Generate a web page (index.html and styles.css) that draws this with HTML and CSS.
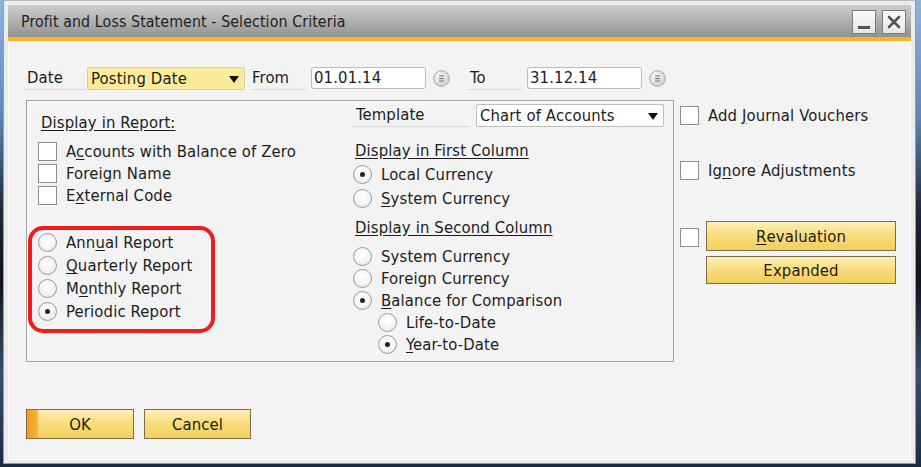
FILE: index.html
```html
<!DOCTYPE html>
<html>
<head>
<meta charset="utf-8">
<link rel="stylesheet" href="styles.css">
</head>
<body>
<div class="window">
  <div class="titlebar">
    <span class="title">Profit and Loss Statement - Selection Criteria</span>
    <div class="tbtns">
      <span class="tbtn"><svg width="16" height="16" viewBox="0 0 16 16"><rect x="2" y="12" width="12" height="3" fill="#555"/></svg></span>
      <span class="tbtn"><svg width="16" height="16" viewBox="0 0 16 16"><path d="M3 3 L13 13 M13 3 L3 13" stroke="#555" stroke-width="2.6" stroke-linecap="round"/></svg></span>
    </div>
  </div>
  <div class="content">
    <div class="daterow">
      <span class="lbl lbl-date">Date</span>
      <span class="combo combo-yellow">Posting Date<span class="arrow"></span></span>
      <span class="lbl lbl-from">From</span>
      <span class="field">01.01.14</span>
      <span class="cal"><svg width="17" height="17" viewBox="0 0 17 17"><defs><radialGradient id="g1" cx="0.4" cy="0.35" r="0.7"><stop offset="0" stop-color="#fbfbfb"/><stop offset="1" stop-color="#c9ccd2"/></radialGradient></defs><circle cx="8.5" cy="8.5" r="7.8" fill="url(#g1)" stroke="#a3a7ae" stroke-width="1"/><path d="M6.2 5.8h4.6M6.2 8.5h4.6M6.2 11.2h4.6" stroke="#7d828a" stroke-width="1.3"/></svg></span>
      <span class="lbl lbl-to">To</span>
      <span class="field">31.12.14</span>
      <span class="cal"><svg width="17" height="17" viewBox="0 0 17 17"><defs><radialGradient id="g2" cx="0.4" cy="0.35" r="0.7"><stop offset="0" stop-color="#fbfbfb"/><stop offset="1" stop-color="#c9ccd2"/></radialGradient></defs><circle cx="8.5" cy="8.5" r="7.8" fill="url(#g2)" stroke="#a3a7ae" stroke-width="1"/><path d="M6.2 5.8h4.6M6.2 8.5h4.6M6.2 11.2h4.6" stroke="#7d828a" stroke-width="1.3"/></svg></span>
    </div>

    <div class="middle">
      <div class="group">
        <div class="col col-left">
          <div class="heading">Display in Report:</div>
          <div class="checks">
            <div class="row"><span class="cb"></span><span>A<u>c</u>counts with Balance of Zero</span></div>
            <div class="row"><span class="cb"></span><span>Forei<u>g</u>n Name</span></div>
            <div class="row"><span class="cb"></span><span>E<u>x</u>ternal Code</span></div>
          </div>
          <div class="highlight">
            <div class="row r23"><span class="rb"></span><span>Ann<u>u</u>al Report</span></div>
            <div class="row r23"><span class="rb"></span><span><u>Q</u>uarterly Report</span></div>
            <div class="row r23"><span class="rb"></span><span>M<u>o</u>nthly Report</span></div>
            <div class="row r23"><span class="rb on"></span><span>Periodic Report</span></div>
          </div>
        </div>
        <div class="col col-right">
          <div class="tplrow">
            <span class="lbl lbl-tpl">Template</span>
            <span class="combo combo-white">Chart of Accounts<span class="arrow"></span></span>
          </div>
          <div class="heading h-first">Display in First Column</div>
          <div class="row r24 rr"><span class="rb on"></span><span>Local Currency</span></div>
          <div class="row r24 rr"><span class="rb"></span><span><u>S</u>ystem Currency</span></div>
          <div class="heading h-second">Display in Second Column</div>
          <div class="row rr first2"><span class="rb"></span><span>System Currency</span></div>
          <div class="row rr"><span class="rb"></span><span>Foreign Currency</span></div>
          <div class="row rr"><span class="rb on"></span><span><u>B</u>alance for Comparison</span></div>
          <div class="row rr sub"><span class="rb"></span><span>Life-to-Date</span></div>
          <div class="row rr sub r23"><span class="rb on"></span><span><u>Y</u>ear-to-Date</span></div>
        </div>
      </div>

      <div class="side">
        <div class="row side-row1"><span class="cb"></span><span>Add <u>J</u>ournal Vouchers</span></div>
        <div class="row side-row2"><span class="cb"></span><span>Ig<u>n</u>ore Adjustments</span></div>
        <div class="side-row3">
          <span class="cb"></span>
          <div class="btnstack">
            <span class="btn btn-wide btn-reval"><u>R</u>evaluation</span>
            <span class="btn btn-wide btn-exp">Expanded</span>
          </div>
        </div>
      </div>
    </div>

    <div class="actions">
      <span class="btn btn-ok">OK</span>
      <span class="btn btn-cancel">Cancel</span>
    </div>
  </div>
</div>
</body>
</html>
```

FILE: styles.css
```css
html, body {
  margin: 0;
  padding: 0;
}
body {
  width: 921px;
  height: 467px;
  overflow: hidden;
  background: linear-gradient(180deg, #8fb4dc 0%, #5f86b4 25%, #1e2838 45%, #0d1420 60%, #3a4f6a 80%, #1b2a40 100%);
  font-family: "DejaVu Sans Condensed", "DejaVu Sans", sans-serif;
  font-size: 16.5px;
  letter-spacing: 0.15px;
  color: #1c1c1c;
}
.window {
  margin-left: 3px;
  width: 913px;
  height: 464px;
  box-sizing: border-box;
  background: #ececec;
  border: 1px solid #9a9a9a;
  border-top-color: #b8b8b8;
  padding: 4px 4px 3px 4px;
  display: flex;
  flex-direction: column;
}
.titlebar {
  height: 32px;
  border-bottom: 4px solid #f1b52a;
  background: linear-gradient(180deg, #cdcdcd 0%, #b4b4b4 45%, #929292 100%);
  display: flex;
  align-items: center;
  justify-content: space-between;
  padding-left: 13px;
  padding-right: 5px;
  flex: none;
}
.title {
  font-size: 15.8px;
  letter-spacing: 0.1px;
  color: #1e1e1e;
  padding-top: 1px;
}
.tbtns {
  display: flex;
  gap: 6px;
  padding-top: 1px;
}
.tbtn {
  width: 22px;
  height: 22px;
  border: 1px solid #7b7b7b;
  background: linear-gradient(180deg, #fbfbfb, #e6e6e6);
  display: flex;
  align-items: center;
  justify-content: center;
}
.content {
  flex: 1;
  background: #f3f3f3;
  border: 1px solid #ffffff;
  border-top: none;
  padding-left: 16px;
}

/* date row */
.daterow {
  display: flex;
  align-items: center;
  margin-top: 25px;
  height: 24px;
}
.lbl {
  box-sizing: border-box;
  height: 24px;
  line-height: 23px;
  border-bottom: 1px solid #d9d9d9;
  padding-left: 2px;
}
.lbl-date { width: 60px; margin-right: 2px; }
.lbl-from { width: 55px; margin-left: 6px; margin-right: 5px; padding-left: 1px; }
.lbl-to { width: 55px; margin-left: 17px; margin-right: 5px; padding-left: 3px; }
.combo {
  box-sizing: border-box;
  position: relative;
  height: 23px;
  line-height: 21px;
  padding-left: 3px;
  border: 1px solid #c9c9c9;
  border-radius: 2px;
}
.combo-yellow {
  width: 158px;
  background: #fdeb9c;
  border-color: #d8cf9e;
}
.combo-white {
  width: 188px;
  background: #ffffff;
  border-color: #bdbdbd;
}
.arrow {
  position: absolute;
  right: 5px;
  top: 8px;
  width: 0;
  height: 0;
  border-left: 5px solid transparent;
  border-right: 5px solid transparent;
  border-top: 7px solid #111;
}
.field {
  box-sizing: border-box;
  width: 115px;
  height: 22px;
  line-height: 20px;
  padding-left: 2px;
  background: #fff;
  border: 1px solid #bcbcbc;
  border-radius: 3px;
}
.cal {
  margin-left: 7px;
  width: 17px;
  height: 17px;
  display: flex;
}

/* middle */
.middle {
  display: flex;
  margin-top: 10px;
  margin-left: 1px;
}
.group {
  box-sizing: border-box;
  width: 648px;
  height: 262px;
  border: 1px solid #a3a3a3;
  box-shadow: inset 1px 1px 0 #ffffff;
  display: flex;
}
.col-left {
  width: 325px;
  padding-left: 11px;
  padding-top: 11px;
  box-sizing: border-box;
}
.col-right {
  padding-top: 3px;
}
.heading {
  height: 22px;
  line-height: 22px;
  padding-left: 3px;
  text-decoration: underline;
  text-underline-offset: 2px;
}
.checks {
  margin-top: 6px;
}
.row {
  display: flex;
  align-items: center;
  height: 22px;
}
.r23 { height: 23px; }
.r24 { height: 24px; }
.cb {
  box-sizing: border-box;
  width: 19px;
  height: 19px;
  border: 1px solid #8d8d8d;
  background: #ffffff;
  margin-right: 9px;
  flex: none;
}
.rb {
  box-sizing: border-box;
  width: 19px;
  height: 19px;
  border-radius: 50%;
  border: 1px solid #9b9b9b;
  background: radial-gradient(circle at 50% 40%, #ffffff 0%, #f4f4f4 55%, #dcdcdc 100%);
  margin-right: 9px;
  flex: none;
  display: flex;
  align-items: center;
  justify-content: center;
}
.rb.on::after {
  content: "";
  width: 5px;
  height: 5px;
  border-radius: 50%;
  background: #222;
}
u {
  text-underline-offset: 2px;
}
.highlight {
  box-sizing: border-box;
  width: 187px;
  margin-top: 20px;
  margin-left: -10px;
  border: 4px solid #ee1c1c;
  border-radius: 15px;
  padding: 1px 0 6px 6px;
}

.tplrow {
  display: flex;
  align-items: center;
  height: 23px;
}
.lbl-tpl {
  width: 118px;
  margin-right: 6px;
  padding-left: 4px;
  height: 23px;
  line-height: 22px;
}
.h-first { margin-top: 13px; }
.h-second { margin-top: 7px; }
.first2 { margin-top: 6px; }
.rr { margin-left: 1px; }
.sub { margin-left: 26px; }

/* side */
.side {
  margin-left: 6px;
  display: flex;
  flex-direction: column;
}
.side-row1 { margin-top: 4px; }
.side-row2 { margin-top: 33px; }
.side-row3 {
  margin-top: 40px;
  display: flex;
  align-items: flex-start;
}
.side-row3 .cb { margin-top: 7px; margin-right: 7px; }
.btnstack {
  display: flex;
  flex-direction: column;
  gap: 5px;
}
.btn {
  box-sizing: border-box;
  display: flex;
  align-items: center;
  justify-content: center;
  border: 1px solid #7e6f4c;
  background: linear-gradient(180deg, #fdf0b8 0%, #f8de80 45%, #f3cf5a 100%);
  color: #1c1c1c;
}
.btn-wide { width: 190px; }
.btn-reval { height: 30px; }
.btn-exp { height: 28px; }

.actions {
  display: flex;
  gap: 10px;
  margin-top: 47px;
  margin-left: 1px;
}
.btn-ok {
  width: 108px;
  height: 30px;
  background: linear-gradient(90deg, #f39a14 0px, #f5b23a 10px, rgba(0,0,0,0) 12px), linear-gradient(180deg, #fdf0b8 0%, #f8de80 45%, #f3cf5a 100%);
}
.btn-cancel {
  width: 107px;
  height: 30px;
}
```
